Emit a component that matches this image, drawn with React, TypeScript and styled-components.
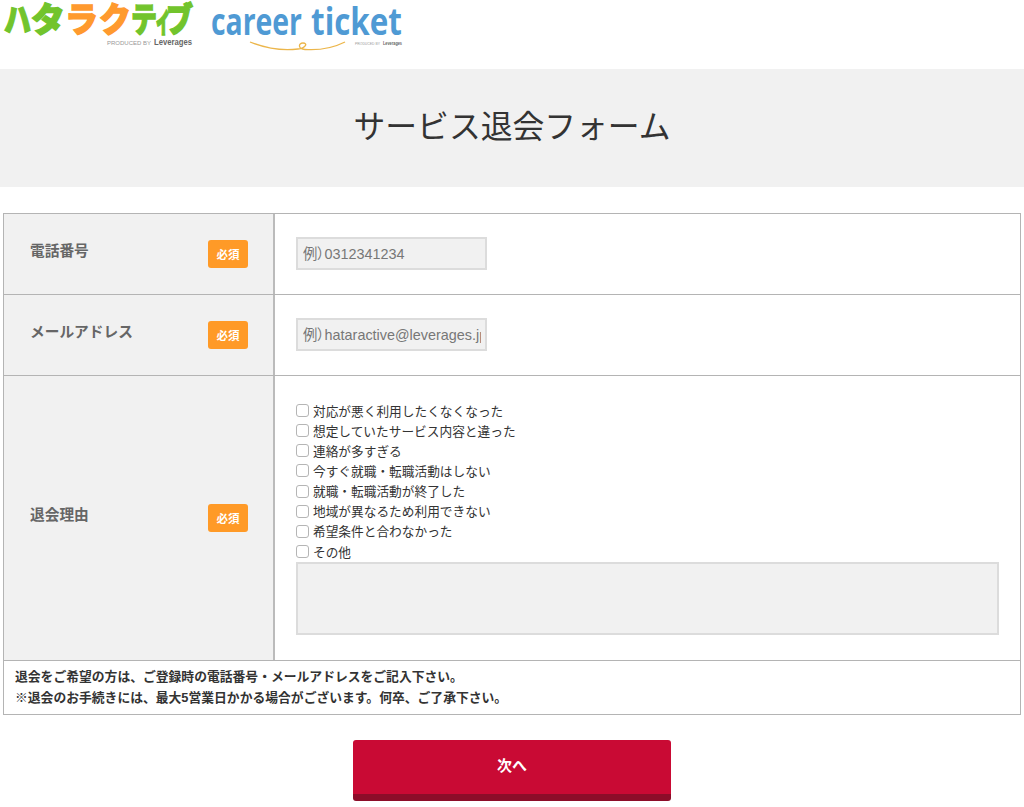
import React from 'react';
import styled, { createGlobalStyle } from 'styled-components';

const FONT = '"Liberation Sans", "Noto Sans CJK JP", sans-serif';

const Global = createGlobalStyle`
  html, body { margin: 0; padding: 0; background: #fff; }
  body { font-family: ${FONT}; color: #333; }
  * { box-sizing: border-box; }
`;

const Header = styled.header`
  height: 69px;
  display: flex;
  align-items: flex-start;
  padding-left: 3px;
  gap: 17px;
`;

const Logo = styled.svg`
  display: block;
  flex: none;
  overflow: visible;
`;

const TitleBand = styled.div`
  height: 118px;
  background: #f1f1f1;
  display: flex;
  align-items: center;
  justify-content: center;
`;

const Title = styled.h1`
  margin: 0;
  font-size: 31.8px;
  font-weight: 400;
  color: #333;
  line-height: 1;
`;

const Table = styled.form`
  margin: 26px 3px 0;
  border: 1px solid #b4b4b4;
  display: flex;
  flex-direction: column;
`;

const Row = styled.div<{ $h: number }>`
  height: ${p => p.$h}px;
  display: grid;
  grid-template-columns: 271px 1fr;
  border-bottom: 1px solid #b4b4b4;
`;

const LabelCell = styled.div`
  background: #f1f1f1;
  border-right: 2px solid #bbb;
  display: flex;
  align-items: center;
  justify-content: space-between;
  padding: 0 25px 0 26px;
`;

const LabelText = styled.span`
  font-size: 14.7px;
  font-weight: 700;
  color: #666;
  margin-top: -10px;
`;

const Required = styled.span`
  width: 40px;
  height: 28px;
  border-radius: 3px;
  background: #ff9a27;
  color: #fff;
  font-size: 11.5px;
  font-weight: 700;
  display: flex;
  align-items: center;
  justify-content: center;
`;

const FieldCell = styled.div`
  padding: 23px 22px 0 21px;
`;

const TextInput = styled.input`
  display: block;
  width: 191px;
  height: 33px;
  border: 2px solid #dcdcdc;
  background: #f1f1f1;
  padding: 0 4px 0 5px;
  font-family: ${FONT};
  font-size: 14.4px;
  font-feature-settings: "palt";
  color: #333;
  border-radius: 0;
  outline: none;
  &::placeholder { color: #777; opacity: 1; }
`;

const ReasonCell = styled.div`
  padding: 24px 21px 0 21px;
  display: flex;
  flex-direction: column;
`;

const CheckRow = styled.label`
  display: flex;
  align-items: center;
  height: 20.15px;
  font-size: 12.7px;
  color: #333;
`;

const Check = styled.input`
  appearance: none;
  width: 13px;
  height: 13px;
  margin: 1px 4px 0 0;
  background: #fff;
  border: 1px solid #b5b5b5;
  border-radius: 3px;
  flex: none;
`;

const Reason = styled.textarea`
  display: block;
  width: 703px;
  height: 73px;
  margin-top: 1px;
  border: 2px solid #dcdcdc;
  background: #f1f1f1;
  resize: none;
  outline: none;
  border-radius: 0;
`;

const Notes = styled.div`
  height: 53px;
  padding: 5px 11px 0;
  font-size: 12.8px;
  font-weight: 700;
  line-height: 21px;
  color: #333;
`;

const NextRow = styled.div`
  display: flex;
  justify-content: center;
  margin-top: 25px;
`;

const NextButton = styled.button`
  width: 318px;
  height: 61px;
  border: none;
  border-bottom: 7px solid #8c0d29;
  border-radius: 3px;
  background: #c90a34;
  color: #fff;
  font-family: ${FONT};
  font-size: 15px;
  font-weight: 700;
  padding: 0 0 6px;
`;

const reasons = [
  '対応が悪く利用したくなくなった',
  '想定していたサービス内容と違った',
  '連絡が多すぎる',
  '今すぐ就職・転職活動はしない',
  '就職・転職活動が終了した',
  '地域が異なるため利用できない',
  '希望条件と合わなかった',
  'その他',
];

const kana = [
  { c: 'ハ', x: 1, w: 27, fill: '#72c42c' },
  { c: 'タ', x: 28, w: 34, fill: '#72c42c' },
  { c: 'ラ', x: 62, w: 33, fill: '#ff9a2e' },
  { c: 'ク', x: 96, w: 32, fill: '#ff9a2e' },
  { c: 'テ', x: 128, w: 26, fill: '#72c42c' },
  { c: 'ィ', x: 152, w: 16, fill: '#72c42c' },
  { c: 'ブ', x: 163, w: 27, fill: '#72c42c' },
];

function HatarakutiveLogo() {
  return (
    <Logo width="190" height="50" viewBox="0 0 190 50">
      <g fontFamily='"Noto Sans CJK JP", sans-serif' fontWeight="900" fontSize="34" strokeWidth="1.4">
        {kana.map(k => (
          <text key={k.c} x={k.x} y="32" fill={k.fill} stroke={k.fill} textLength={k.w} lengthAdjust="spacingAndGlyphs">
            {k.c}
          </text>
        ))}
      </g>
      <text x="104" y="45" fontFamily='"Liberation Sans", sans-serif' fontSize="5.5" fill="#999" textLength="44" lengthAdjust="spacingAndGlyphs">
        PRODUCED BY
      </text>
      <text x="151" y="45" fontFamily='"Liberation Sans", sans-serif' fontSize="8.5" fontWeight="700" fill="#666" textLength="38" lengthAdjust="spacingAndGlyphs">
        Leverages
      </text>
    </Logo>
  );
}

function CareerTicketLogo() {
  return (
    <Logo width="196" height="56" viewBox="0 0 196 56">
      <g fontFamily='"Open Sans", sans-serif' fontSize="37" fontWeight="700" fill="#4f9ad4">
        <text x="1" y="35" textLength="91" lengthAdjust="spacingAndGlyphs">career</text>
        <text x="101" y="35" textLength="91" lengthAdjust="spacingAndGlyphs">ticket</text>
      </g>
      <path
        d="M40 42 C 55 48, 72 51, 88 49 C 96 48, 98 43, 93 43 C 88 43, 88 49, 95 49.5 C 110 50.5, 125 47, 135 42"
        fill="none"
        stroke="#ecb64b"
        strokeWidth="1.3"
      />
      <text x="145" y="45" fontFamily='"Liberation Sans", sans-serif' fontSize="3" fill="#999" textLength="25" lengthAdjust="spacingAndGlyphs">
        PRODUCED BY
      </text>
      <text x="173" y="45" fontFamily='"Liberation Sans", sans-serif' fontSize="4.5" fontWeight="700" fill="#666" textLength="19" lengthAdjust="spacingAndGlyphs">
        Leverages
      </text>
    </Logo>
  );
}

export default function App() {
  return (
    <>
      <Global />
      <Header>
        <HatarakutiveLogo />
        <CareerTicketLogo />
      </Header>
      <TitleBand>
        <Title>サービス退会フォーム</Title>
      </TitleBand>
      <Table onSubmit={e => e.preventDefault()}>
        <Row $h={81}>
          <LabelCell>
            <LabelText>電話番号</LabelText>
            <Required>必須</Required>
          </LabelCell>
          <FieldCell>
            <TextInput placeholder="例）0312341234" />
          </FieldCell>
        </Row>
        <Row $h={81}>
          <LabelCell>
            <LabelText>メールアドレス</LabelText>
            <Required>必須</Required>
          </LabelCell>
          <FieldCell>
            <TextInput placeholder="例）hataractive@leverages.jp" />
          </FieldCell>
        </Row>
        <Row $h={285}>
          <LabelCell>
            <LabelText>退会理由</LabelText>
            <Required>必須</Required>
          </LabelCell>
          <ReasonCell>
            {reasons.map(r => (
              <CheckRow key={r}>
                <Check type="checkbox" />
                {r}
              </CheckRow>
            ))}
            <Reason />
          </ReasonCell>
        </Row>
        <Notes>
          退会をご希望の方は、ご登録時の電話番号・メールアドレスをご記入下さい。
          <br />
          ※退会のお手続きには、最大5営業日かかる場合がございます。何卒、ご了承下さい。
        </Notes>
      </Table>
      <NextRow>
        <NextButton type="button">次へ</NextButton>
      </NextRow>
    </>
  );
}
